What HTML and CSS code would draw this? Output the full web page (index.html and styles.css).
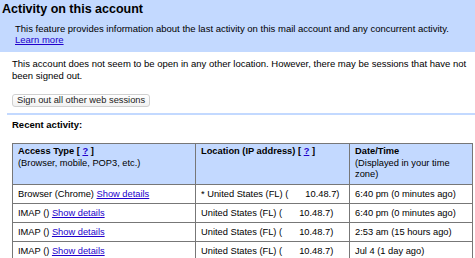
FILE: index.html
```html
<!DOCTYPE html>
<html lang="en">
<head>
    <meta charset="UTF-8">
    <title>Activity on this account</title>
    <link rel="stylesheet" href="styles.css">
</head>
<body>
    <div class="intro">
        <h1>Activity on this account</h1>
        <p class="desc">This feature provides information about the last activity on this mail account and any concurrent activity.<br><a href="#">Learn more</a></p>
    </div>

    <div class="status">
        <p>This account does not seem to be open in any other location. However, there may be sessions that have not been signed out.</p>
        <button class="signout">Sign out all other web sessions</button>
    </div>

    <div class="recent">
        <h2>Recent activity:</h2>
        <table class="activity">
            <tr>
                <th class="col-type"><b>Access Type</b> <b>[ <a href="#">?</a> ]</b><br>(Browser, mobile, POP3, etc.)</th>
                <th class="col-loc"><b>Location (IP address)</b> <b>[ <a href="#">?</a> ]</b></th>
                <th class="col-date"><b>Date/Time</b><br>(Displayed in your time zone)</th>
            </tr>
            <tr>
                <td>Browser (Chrome) <a href="#">Show details</a></td>
                <td class="loc">* United States (FL) (<span class="ip">10.48.7)</span></td>
                <td>6:40 pm (0 minutes ago)</td>
            </tr>
            <tr>
                <td>IMAP () <a href="#">Show details</a></td>
                <td class="loc">United States (FL) (<span class="ip">10.48.7)</span></td>
                <td>6:40 pm (0 minutes ago)</td>
            </tr>
            <tr>
                <td>IMAP () <a href="#">Show details</a></td>
                <td class="loc">United States (FL) (<span class="ip">10.48.7)</span></td>
                <td>2:53 am (15 hours ago)</td>
            </tr>
            <tr>
                <td>IMAP () <a href="#">Show details</a></td>
                <td class="loc">United States (FL) (<span class="ip">10.48.7)</span></td>
                <td>Jul 4 (1 day ago)</td>
            </tr>
        </table>
    </div>
</body>
</html>
```

FILE: styles.css
```css
body {
    font-family: 'Liberation Sans', Arial, sans-serif;
    font-size: 9.5px;
    color: #000;
    background-color: #fff;
    margin: 0;
}
a {
    color: #2200cc;
    text-decoration: underline;
}
.intro {
    background-color: #c3d9ff;
    height: 52px;
    padding: 2px 2px 0;
    box-sizing: border-box;
}
.intro h1 {
    font-size: 12.5px;
    line-height: 14px;
    margin: 0;
}
.intro .desc {
    margin: 7px 0 0 13px;
    line-height: 11px;
}
.status {
    padding: 6px 4px 0 12px;
}
.status p {
    margin: 0;
    line-height: 12px;
}
.signout {
    display: block;
    font-family: inherit;
    font-size: 9.3px;
    white-space: nowrap;
    margin-top: 12px;
    padding: 0 4px;
    height: 13px;
    line-height: 11px;
    border: 1px solid #d0d0d0;
    border-radius: 3px;
    background: linear-gradient(#fff, #f1f1f1);
    color: #222;
}
.recent {
    margin: 6px 0 0 7px;
    border-top: 2px solid #c3d9ff;
    padding: 4px 0 0 5px;
}
.recent h2 {
    font-size: 9.5px;
    line-height: 12px;
    margin: 0 0 12px;
}
.activity {
    border-collapse: collapse;
    width: 461px;
    font-size: 9.3px;
}
.activity th, .activity td {
    border: 1px solid #777;
    padding: 3px 5px;
    text-align: left;
    vertical-align: top;
    line-height: 12px;
}
.activity th {
    font-weight: normal;
    background-color: #c3d9ff;
    height: 35px;
    padding-top: 2px;
    line-height: 11.5px;
}
.col-type { width: 172px; }
.col-loc { width: 143px; }
.loc {
    white-space: nowrap;
}
.ip {
    padding-left: 17px;
}
```
